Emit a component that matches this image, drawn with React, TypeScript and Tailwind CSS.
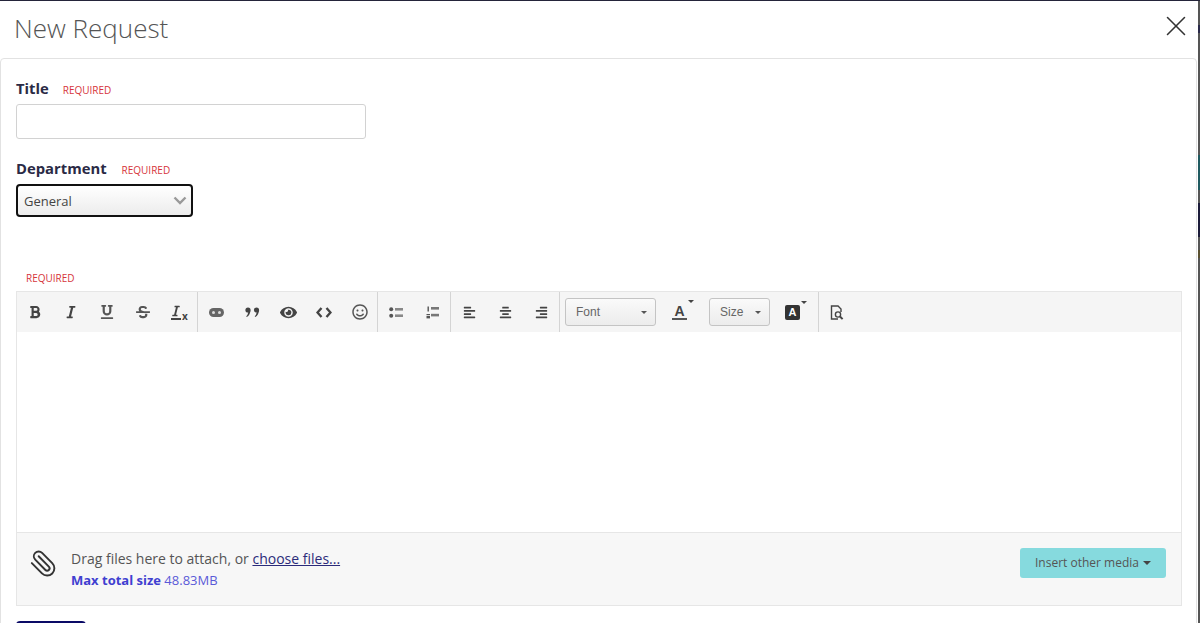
import { FaAlignCenter, FaAlignLeft, FaAlignRight, FaBold, FaEye, FaItalic, FaRegSmile, FaStrikethrough, FaUnderline } from "react-icons/fa";
import { Paperclip, X } from "lucide-react";
import type { ReactNode } from "react";

const sans = "font-['Open_Sans',sans-serif]";

function Required() {
  return <span className="text-[10px] uppercase leading-none text-[#d6353b]">Required</span>;
}

function Tool({ children }: { children: ReactNode }) {
  return <div className="flex h-full w-9 items-center justify-center text-[#444]">{children}</div>;
}

function Sep({ pull = false }: { pull?: boolean }) {
  return <div className={`h-full w-px bg-[#d4d4d4] ${pull ? "-ml-px" : ""}`} />;
}

function Pick({ label, w }: { label: string; w: string }) {
  return (
    <div className={`flex h-7 ${w} items-center justify-between rounded-[3px] border border-[#c4c4c4] bg-gradient-to-b from-[#fafafa] to-[#ececec] pl-[10px] pr-[8px] font-['Liberation_Sans',sans-serif] text-[12px] text-[#666]`}>
      {label}
      <span className="mt-px border-x-[3px] border-t-[3px] border-x-transparent border-t-[#555]" />
    </div>
  );
}

function Caret() {
  return <span className="absolute -right-[7px] top-[-4px] border-x-[3px] border-t-[3px] border-x-transparent border-t-[#444]" />;
}

export default function App() {
  return (
    <div className={`${sans} flex h-[623px] w-[1200px] flex-col overflow-hidden bg-[#24243a] pt-px`}>
      <div className="flex min-h-0 flex-1">
        <div className="w-[1198px] bg-white">
          {/* header */}
          <div className="flex h-[57px] items-start justify-between pl-[14px] pr-[5px]">
            <h1 className="mt-[8px] text-[26px] font-light leading-[38px] text-[#555]">New Request</h1>
            <X size={34} strokeWidth={1.1} className="mt-[8px] text-[#333]" />
          </div>

          {/* form */}
          <div className="h-[600px] w-[1197px] rounded-tl-[4px] rounded-tr-[4px] border border-[#e2e2e2] pl-[15px] pr-[13px] pt-[19px]">
            <div className="flex h-[20px] items-center gap-[14px]">
              <label className="text-[14.8px] font-bold leading-5 text-[#2a2a45]">Title</label>
              <span className="mt-[3px] flex"><Required /></span>
            </div>
            <div className="mt-[6px] h-[35px] w-[350px] rounded-[3px] border border-[#d2d2d2] bg-white" />

            <div className="mt-[19px] flex h-[20px] items-center gap-[15px]">
              <label className="text-[14.8px] font-bold leading-5 text-[#2a2a45]">Department</label>
              <span className="mt-[3px] flex"><Required /></span>
            </div>
            <div className="mt-[6px] flex h-[33px] w-[177px] items-center justify-between rounded-[4px] border-2 border-[#111] bg-gradient-to-b from-white to-[#ececec] pl-[6px] pr-[4px] text-[13px] text-[#444]">
              <span className="mt-[2px]">General</span>
              <svg width="14" height="9" viewBox="0 0 14 9" fill="none" stroke="#999" strokeWidth="2.4"><path d="M1.5 1.5 7 7l5.5-5.5" /></svg>
            </div>

            <div className="ml-[10px] mt-[56px] flex h-[10px] items-center"><Required /></div>

            {/* editor */}
            <div className="mt-[8px] w-[1166px] border border-[#e6e6e6]">
              <div className="flex h-[40px] items-center bg-[#f5f5f5]">
                <Tool><FaBold size={14} /></Tool>
                <Tool><FaItalic size={14} /></Tool>
                <Tool><FaUnderline size={14} className="text-[#555]" /></Tool>
                <Tool><FaStrikethrough size={14} className="text-[#555]" /></Tool>
                <Tool>
                  <span className="flex flex-col items-center">
                    <FaItalic size={12} />
                    <span className="mt-px h-[2px] w-[10px] bg-[#444]" />
                  </span>
                  <span className="mt-[8px] text-[10px] font-bold leading-none">x</span>
                </Tool>
                <Sep />
                <Tool>
                  <svg width="15" height="9" viewBox="0 0 15 9"><rect width="15" height="9" rx="4.5" fill="#666" /><circle cx="4.5" cy="4.5" r="1.5" fill="#ddd" /><circle cx="10.5" cy="4.5" r="1.5" fill="#ddd" /></svg>
                </Tool>
                <Tool>
                  <svg width="15" height="10" viewBox="0 0 15 10" fill="#444"><circle cx="3" cy="3" r="2.6" /><path d="M5.4 3.5C5.2 6.5 4 9 1.8 10l-.6-.8C2.5 8.2 3 7 3 5.5z" /><circle cx="11.5" cy="3" r="2.6" /><path d="M13.9 3.5c-.2 3-1.4 5.5-3.6 6.5l-.6-.8c1.3-1 1.8-2.2 1.8-3.7z" /></svg>
                </Tool>
                <Tool><FaEye size={17} /></Tool>
                <Tool>
                  <svg width="16" height="11" viewBox="0 0 16 11" fill="none" stroke="#444" strokeWidth="2.4"><path d="M5.5 1 1.5 5.5l4 4.5M10.5 1l4 4.5-4 4.5" /></svg>
                </Tool>
                <Tool><FaRegSmile size={16} className="text-[#555]" /></Tool>
                <Sep pull />
                <Tool>
                  <svg width="15" height="11" viewBox="0 0 15 11" fill="#555"><circle cx="2.2" cy="2.2" r="2" /><circle cx="2.2" cy="8.8" r="2" /><rect x="6" y="1" width="8" height="2.6" fill="#888" /><rect x="6" y="7.4" width="8" height="2.6" fill="#888" /></svg>
                </Tool>
                <Tool>
                  <svg width="13" height="13" viewBox="0 0 13 13" fill="#777"><rect x="1.5" y="0.5" width="1.4" height="5" fill="#555" /><rect x="0.5" y="8" width="3.5" height="1.2" fill="#555" /><rect x="0.5" y="10" width="3.5" height="2.4" fill="#555" /><rect x="5" y="1" width="8" height="2.6" /><rect x="5" y="7.8" width="8" height="2.6" /></svg>
                </Tool>
                <Sep />
                <Tool><FaAlignLeft size={13} /></Tool>
                <Tool><FaAlignCenter size={13} /></Tool>
                <Tool><FaAlignRight size={13} /></Tool>
                <Sep />
                <div className="ml-[5px]"><Pick label="Font" w="w-[91px]" /></div>
                <div className="relative ml-[16px] flex flex-col items-center font-['Liberation_Sans',sans-serif] text-[14px] font-bold leading-[14px] text-[#444]">
                  <span>A</span>
                  <span className="h-[2px] w-[15px] bg-[#555]" />
                  <Caret />
                </div>
                <div className="ml-[22px]"><Pick label="Size" w="w-[61px]" /></div>
                <div className="relative ml-[15px] flex h-[15px] w-[15px] items-center justify-center rounded-[2px] bg-[#333] font-['Liberation_Sans',sans-serif] text-[11px] font-bold leading-none text-white">
                  A
                  <Caret />
                </div>
                <div className="ml-[18px] h-full w-px bg-[#d4d4d4]" />
                <div className="ml-[11px] text-[#444]">
                  <svg width="14" height="15" viewBox="0 0 14 15" fill="none" stroke="currentColor" strokeWidth="1.4"><path d="M8 14H1.5V1H8l3 3v3" /><circle cx="8" cy="9.5" r="2.6" /><path d="m10 11.5 2.6 2.6" strokeWidth="2" /></svg>
                </div>
              </div>
              <div className="h-[200px] bg-white" />
              <div className="flex h-[73px] items-start justify-between border-t border-[#e6e6e6] bg-[#f7f7f7] pl-[12px] pr-[15px] pt-[15px]">
                <div className="flex items-start gap-[13px]">
                  <Paperclip size={29} strokeWidth={1.6} className="mt-px -scale-x-100 text-[#333]" />
                  <div className="mt-px">
                    <p className="text-[14px] leading-[20px] text-[#555]">
                      Drag files here to attach, or <a className="text-[#2b2b7a] underline">choose files...</a>
                    </p>
                    <p className="mt-[3px] text-[13px] leading-[17px] text-[#5a5ad8]">
                      <b className="text-[#3f3fd0]">Max total size</b> 48.83MB
                    </p>
                  </div>
                </div>
                <div className="flex h-[30px] w-[146px] items-center justify-center gap-[4px] rounded-[3px] bg-[#86dade] text-[12px] text-[#555]">
                  Insert other media
                  <span className="border-x-[4px] border-t-[4px] border-x-transparent border-t-[#444]" />
                </div>
              </div>
            </div>

            <div className="mt-[15px] h-[30px] w-[70px] rounded-[4px] bg-[#0a0a66]" />
          </div>
        </div>

        {/* page behind the modal */}
        <div className="flex w-[2px] flex-col bg-[#555]">
          <div className="mt-[24px] h-[8px] bg-[#2a2a4a]" />
          <div className="mt-[122px] h-[35px] bg-[#1f5a60]" />
          <div className="mt-[13px] h-[34px] bg-[#1c1c3a]" />
          <div className="mt-[13px] h-[8px] bg-[#5a5030]" />
        </div>
      </div>
    </div>
  );
}
